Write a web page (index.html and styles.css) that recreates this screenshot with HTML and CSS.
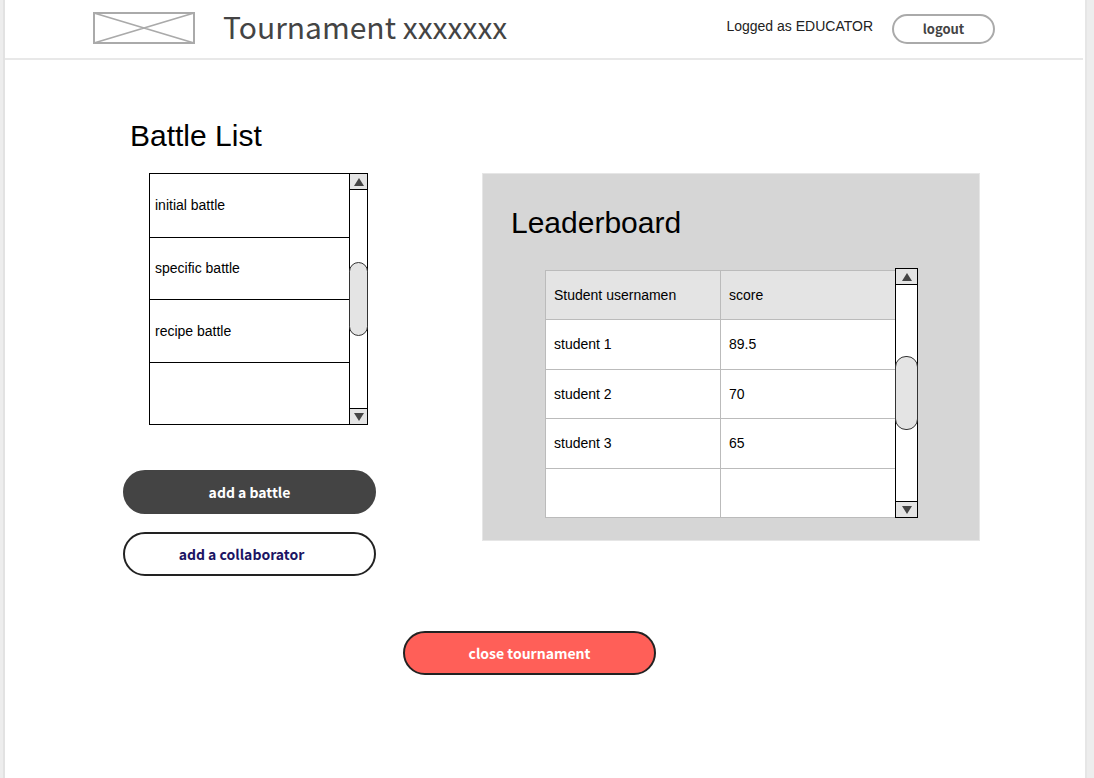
FILE: index.html
```html
<!DOCTYPE html>
<html lang="en">
<head>
<meta charset="utf-8">
<meta name="viewport" content="width=device-width, initial-scale=1">
<title>Tournament</title>
<link rel="stylesheet" href="styles.css">
</head>
<body>
<div class="page">
  <header class="topbar">
    <svg class="logo" viewBox="0 0 102 32" role="img" aria-label="Logo">
      <path d="M1 1L101 31M1 31L101 1" fill="none" stroke="#aaa" stroke-width="1.8"/>
      <rect x="1" y="1" width="100" height="30" fill="none" stroke="#aaa" stroke-width="2"/>
    </svg>
    <h1 class="title">Tournament xxxxxxx</h1>
    <span class="user">Logged as EDUCATOR</span>
    <button class="pill pill-small" type="button">logout</button>
  </header>
  <main class="content">
    <h2 class="heading battles-heading">Battle List</h2>
    <div class="columns">
      <section class="battles">
        <div class="battle-box">
          <ul class="battle-list">
            <li>initial battle</li>
            <li>specific battle</li>
            <li>recipe battle</li>
            <li></li>
          </ul>
          <div class="scrollbar">
            <button class="arrow" type="button" aria-label="Scroll up"><svg viewBox="0 0 10 8"><path d="M5 0L10 8H0Z"/></svg></button>
            <div class="track"><div class="thumb"></div></div>
            <button class="arrow arrow-down" type="button" aria-label="Scroll down"><svg viewBox="0 0 10 8"><path d="M5 8L10 0H0Z"/></svg></button>
          </div>
        </div>
        <button class="pill pill-dark" type="button">add a battle</button>
        <button class="pill pill-outline" type="button">add a collaborator</button>
      </section>
      <section class="leaderboard">
        <h2 class="heading">Leaderboard</h2>
        <div class="board">
          <table class="scores">
            <thead>
              <tr><th>Student usernamen</th><th>score</th></tr>
            </thead>
            <tbody>
              <tr><td>student 1</td><td>89.5</td></tr>
              <tr><td>student 2</td><td>70</td></tr>
              <tr><td>student 3</td><td>65</td></tr>
              <tr><td></td><td></td></tr>
            </tbody>
          </table>
          <div class="scrollbar scrollbar-wide">
            <button class="arrow" type="button" aria-label="Scroll up"><svg viewBox="0 0 10 8"><path d="M5 0L10 8H0Z"/></svg></button>
            <div class="track"><div class="thumb"></div></div>
            <button class="arrow arrow-down" type="button" aria-label="Scroll down"><svg viewBox="0 0 10 8"><path d="M5 8L10 0H0Z"/></svg></button>
          </div>
        </div>
      </section>
    </div>
    <div class="actions">
      <button class="pill pill-danger" type="button">close tournament</button>
    </div>
  </main>
</div>
</body>
</html>
```

FILE: styles.css
```css
* {
  box-sizing: border-box;
}

body {
  margin: 0;
  background: #ededed;
  color: #000;
  font: 14px/20px "Liberation Sans", Arial, sans-serif;
}

.page {
  min-height: 100vh;
  margin: 0 7px 0 3px;
  background: #fff;
  border-left: 2px solid #e2e2e2;
  border-right: 2px solid #e6e6e6;
}

.topbar {
  display: flex;
  align-items: center;
  height: 60px;
  padding: 0 88px 2px 88px;
  margin-right: 2px;
  border-bottom: 2px solid #e8e8e8;
}

.logo {
  flex: none;
  width: 102px;
  height: 32px;
}

.title {
  margin: 0 0 4px 28px;
  color: #444;
  font: 400 30px/40px "Noto Sans CJK SC", sans-serif;
  white-space: nowrap;
}

.user {
  margin: 0 19px 4px auto;
  color: #222;
  white-space: nowrap;
}

.pill {
  display: block;
  width: 253px;
  height: 44px;
  padding: 0;
  border: 2px solid #222;
  border-radius: 22px;
  font: 700 14px/20px "Noto Sans CJK SC", sans-serif;
}

.pill-small {
  width: 103px;
  height: 30px;
  margin-top: 2px;
  border-color: #aaa;
  background: #fff;
  color: #444;
  font-size: 13px;
}

.pill-dark {
  border-color: #444;
  background: #444;
  color: #fff;
}

.pill-outline {
  margin-top: 18px;
  padding-right: 16px;
  background: #fff;
  color: #1b1464;
}

.pill-danger {
  background: #ff5f58;
  color: #fff;
}

.content {
  padding: 56px 105px 40px 118px;
}

.heading {
  margin: 0;
  font-weight: 400;
  font-size: 30px;
  line-height: 40px;
}

.battles-heading {
  margin: 0 0 17px 7px;
}

.columns {
  display: flex;
  align-items: flex-start;
  gap: 106px;
}

.battles {
  flex: none;
  width: 253px;
}

.battle-box {
  display: flex;
  height: 252px;
  margin: 0 8px 45px 26px;
}

.battle-list {
  display: grid;
  grid-template-rows: repeat(4, 1fr);
  flex: 1;
  margin: 0;
  padding: 0;
  border: 1px solid #000;
  border-right: 0;
  list-style: none;
}

.battle-list li {
  display: flex;
  align-items: center;
  padding: 0 5px;
}

.battle-list li + li {
  border-top: 1px solid #000;
}

.scrollbar {
  display: flex;
  flex-direction: column;
  flex: none;
  width: 19px;
  border: 1px solid #000;
  background: #fff;
}

.arrow {
  display: flex;
  align-items: center;
  justify-content: center;
  height: 16px;
  padding: 0;
  border: 0;
  border-bottom: 1px solid #000;
  background: #e4e4e4;
}

.arrow-down {
  border-top: 1px solid #000;
  border-bottom: 0;
}

.arrow svg {
  width: 10px;
  height: 8px;
  fill: #444;
}

.track {
  display: flex;
  flex-direction: column;
  justify-content: center;
  flex: 1;
}

.thumb {
  height: 74px;
  margin: 0 -1px;
  border: 1px solid #333;
  border-radius: 11px;
  background: #e4e4e4;
}

.leaderboard {
  flex: 1;
  height: 368px;
  padding: 29px 61px 22px 62px;
  border: 1px solid #e6e6e6;
  background: #d6d6d6;
}

.leaderboard .heading {
  margin: 0 0 25px -34px;
}

.board {
  display: flex;
  align-items: flex-end;
  height: 250px;
}

.scores {
  flex: 1;
  width: 100%;
  height: 248px;
  table-layout: fixed;
  border-collapse: collapse;
  background: #fff;
}

.scores th,
.scores td {
  height: 49px;
  padding: 0 8px;
  border: 1px solid #bbb;
  font-weight: 400;
  text-align: left;
}

.scores th {
  background: #e4e4e4;
}

.scrollbar-wide {
  align-self: stretch;
  width: 23px;
  margin-left: -1px;
}

.actions {
  padding: 55px 0 0 280px;
}
```
